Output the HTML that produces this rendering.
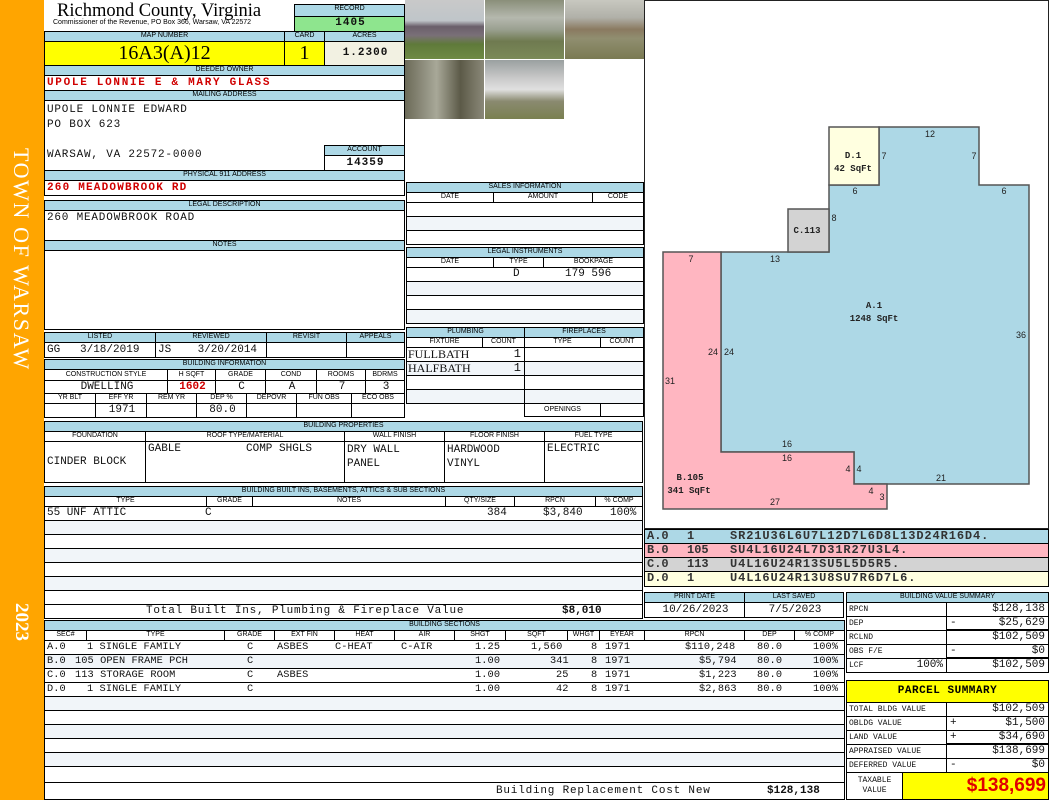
<!DOCTYPE html>
<html><head><meta charset="utf-8"><style>
*{margin:0;padding:0}
body{width:1050px;height:800px;background:#fff;position:relative;overflow:hidden;font-family:"Liberation Sans",sans-serif}
.c{position:absolute;box-sizing:border-box;border:1px solid #000;overflow:hidden;white-space:nowrap}
.h{background:#add8e6;font:7px/8px "Liberation Sans",sans-serif;text-align:center;color:#000}
.m{font:11px/12px "Liberation Mono",monospace;padding-left:2px;color:#111}
.r{text-align:right;padding-right:3px}
.ctr{text-align:center}
.t{position:absolute;white-space:nowrap}
.red{color:#d00000;font-weight:bold}
.st{background:#f1f5f9}
.sec{font-size:10.3px;letter-spacing:0.1px}
</style></head><body>
<!-- sidebar -->
<div style="position:absolute;left:0;top:0;width:44px;height:800px;background:#ffa500"></div>
<div class="t" style="left:22px;top:148px;transform-origin:0 0;transform:rotate(90deg) translateY(-12px);color:#fff;font:22px 'Liberation Serif',serif;letter-spacing:1.6px">TOWN OF WARSAW</div>
<div class="t" style="left:22px;top:603px;transform-origin:0 0;transform:rotate(90deg) translateY(-10px);color:#fff;font:bold 19px 'Liberation Serif',serif">2023</div>

<!-- header -->
<div class="t" style="left:57px;top:1px;font:18.5px 'Liberation Serif',serif">Richmond County, Virginia</div>
<div class="t" style="left:53px;top:19px;font:7px 'Liberation Sans',sans-serif">Commissioner of the Revenue, PO Box 366, Warsaw, VA 22572</div>
<div class="c h" style="left:294px;top:4px;width:111px;height:13px">RECORD</div>
<div class="c m ctr" style="left:294px;top:16px;width:111px;height:16px;background:#8ee58e;font-weight:bold;letter-spacing:1px">1405</div>

<div class="c h" style="left:44px;top:31px;width:241px;height:11px">MAP NUMBER</div>
<div class="c h" style="left:284px;top:31px;width:41px;height:11px">CARD</div>
<div class="c h" style="left:324px;top:31px;width:81px;height:11px">ACRES</div>
<div class="c ctr" style="left:44px;top:41px;width:241px;height:25px;background:#ffff00;font:20px/23px 'Liberation Serif',serif">16A3(A)12</div>
<div class="c ctr" style="left:284px;top:41px;width:41px;height:25px;background:#ffff00;font:20px/23px 'Liberation Serif',serif">1</div>
<div class="c m ctr" style="left:324px;top:41px;width:81px;height:25px;background:#f2f1e2;line-height:23px;font-weight:bold;letter-spacing:1px">1.2300</div>

<div class="c h" style="left:44px;top:65px;width:361px;height:11px">DEEDED OWNER</div>
<div class="c m red" style="left:44px;top:75px;width:361px;height:16px;line-height:15px;letter-spacing:1.7px">UPOLE LONNIE E &amp; MARY GLASS</div>
<div class="c h" style="left:44px;top:90px;width:361px;height:11px">MAILING ADDRESS</div>
<div class="c m" style="left:44px;top:100px;width:361px;height:71px;line-height:15px;padding-top:2px;letter-spacing:0.8px">UPOLE LONNIE EDWARD<br>PO BOX 623<br><br>WARSAW, VA 22572-0000</div>
<div class="c h" style="left:324px;top:145px;width:81px;height:11px">ACCOUNT</div>
<div class="c m ctr" style="left:324px;top:155px;width:81px;height:16px;font-weight:bold;line-height:15px;letter-spacing:1px">14359</div>
<div class="c h" style="left:44px;top:170px;width:361px;height:11px">PHYSICAL 911 ADDRESS</div>
<div class="c m red" style="left:44px;top:180px;width:361px;height:16px;line-height:15px;letter-spacing:1.2px">260 MEADOWBROOK RD</div>
<div class="c h" style="left:44px;top:200px;width:361px;height:11px">LEGAL DESCRIPTION</div>
<div class="c m" style="left:44px;top:210px;width:361px;height:31px;line-height:15px;letter-spacing:0.8px">260 MEADOWBROOK ROAD</div>
<div class="c h" style="left:44px;top:240px;width:361px;height:11px">NOTES</div>
<div class="c" style="left:44px;top:250px;width:361px;height:80px"></div>

<!-- listed -->
<div class="c h" style="left:44px;top:332px;width:112px;height:11px">LISTED</div>
<div class="c h" style="left:155px;top:332px;width:112px;height:11px">REVIEWED</div>
<div class="c h" style="left:266px;top:332px;width:81px;height:11px">REVISIT</div>
<div class="c h" style="left:346px;top:332px;width:59px;height:11px">APPEALS</div>
<div class="c m" style="left:44px;top:342px;width:112px;height:16px;line-height:14px">GG&nbsp;&nbsp;&nbsp;3/18/2019</div>
<div class="c m" style="left:155px;top:342px;width:112px;height:16px;line-height:14px">JS&nbsp;&nbsp;&nbsp;&nbsp;3/20/2014</div>
<div class="c" style="left:266px;top:342px;width:81px;height:16px"></div>
<div class="c" style="left:346px;top:342px;width:59px;height:16px"></div>

<!-- building info -->
<div class="c h" style="left:44px;top:359px;width:361px;height:11px">BUILDING INFORMATION</div>
<div class="c h" style="left:44px;top:369px;width:124px;height:12px;background:#fff;line-height:10px">CONSTRUCTION STYLE</div>
<div class="c h" style="left:167px;top:369px;width:49px;height:12px;background:#fff;line-height:10px">H SQFT</div>
<div class="c h" style="left:215px;top:369px;width:51px;height:12px;background:#fff;line-height:10px">GRADE</div>
<div class="c h" style="left:265px;top:369px;width:52px;height:12px;background:#fff;line-height:10px">COND</div>
<div class="c h" style="left:316px;top:369px;width:50px;height:12px;background:#fff;line-height:10px">ROOMS</div>
<div class="c h" style="left:365px;top:369px;width:40px;height:12px;background:#fff;line-height:10px">BDRMS</div>
<div class="c m ctr" style="left:44px;top:380px;width:124px;height:14px">DWELLING</div>
<div class="c m ctr red" style="left:167px;top:380px;width:49px;height:14px">1602</div>
<div class="c m ctr" style="left:215px;top:380px;width:51px;height:14px">C</div>
<div class="c m ctr" style="left:265px;top:380px;width:52px;height:14px">A</div>
<div class="c m ctr" style="left:316px;top:380px;width:50px;height:14px">7</div>
<div class="c m ctr" style="left:365px;top:380px;width:40px;height:14px">3</div>
<div class="c h" style="left:44px;top:393px;width:52px;height:11px;background:#fff">YR BLT</div>
<div class="c h" style="left:95px;top:393px;width:52px;height:11px;background:#fff">EFF YR</div>
<div class="c h" style="left:146px;top:393px;width:51px;height:11px;background:#fff">REM YR</div>
<div class="c h" style="left:196px;top:393px;width:51px;height:11px;background:#fff">DEP %</div>
<div class="c h" style="left:246px;top:393px;width:51px;height:11px;background:#fff">DEPOVR</div>
<div class="c h" style="left:296px;top:393px;width:56px;height:11px;background:#fff">FUN OBS</div>
<div class="c h" style="left:351px;top:393px;width:54px;height:11px;background:#fff">ECO OBS</div>
<div class="c" style="left:44px;top:403px;width:52px;height:15px"></div>
<div class="c m ctr" style="left:95px;top:403px;width:52px;height:15px">1971</div>
<div class="c" style="left:146px;top:403px;width:51px;height:15px"></div>
<div class="c m ctr" style="left:196px;top:403px;width:51px;height:15px">80.0</div>
<div class="c" style="left:246px;top:403px;width:51px;height:15px"></div>
<div class="c" style="left:296px;top:403px;width:56px;height:15px"></div>
<div class="c" style="left:351px;top:403px;width:54px;height:15px"></div>

<!-- photos -->
<div style="position:absolute;left:405px;top:0;width:79px;height:59px;background:linear-gradient(#c9c9c9 0,#bfc5c9 35%,#6a5f6a 45%,#7a7078 60%,#5f7a3a 75%,#6f8a45 100%)"></div>
<div style="position:absolute;left:485px;top:0;width:79px;height:59px;background:linear-gradient(#8a8f7a 0,#b5b8ae 30%,#9aa090 50%,#6f7a50 70%,#7b8a58 100%)"></div>
<div style="position:absolute;left:565px;top:0;width:79px;height:59px;background:linear-gradient(#c8c8c0 0,#b0b0a8 30%,#8a7a60 50%,#908e70 65%,#7a7a52 100%)"></div>
<div style="position:absolute;left:405px;top:60px;width:79px;height:59px;background:linear-gradient(90deg,#6b6a58,#a8a898 40%,#5c5a48 70%,#8a8878)"></div>
<div style="position:absolute;left:485px;top:60px;width:79px;height:59px;background:linear-gradient(#9aa0a0 0,#c8c8c8 30%,#e0e0e0 50%,#8a8a70 70%,#7a8050 100%)"></div>

<!-- sales -->
<div class="c h" style="left:406px;top:182px;width:238px;height:11px">SALES INFORMATION</div>
<div class="c h" style="left:406px;top:192px;width:88px;height:11px;background:#fff">DATE</div>
<div class="c h" style="left:493px;top:192px;width:100px;height:11px;background:#fff">AMOUNT</div>
<div class="c h" style="left:592px;top:192px;width:52px;height:11px;background:#fff">CODE</div>
<div class="c" style="left:406px;top:202px;width:238px;height:15px"></div>
<div class="c st" style="left:406px;top:216px;width:238px;height:15px"></div>
<div class="c" style="left:406px;top:230px;width:238px;height:15px"></div>
<div class="c h" style="left:406px;top:247px;width:238px;height:11px">LEGAL INSTRUMENTS</div>
<div class="c h" style="left:406px;top:257px;width:88px;height:11px;background:#fff">DATE</div>
<div class="c h" style="left:493px;top:257px;width:51px;height:11px;background:#fff">TYPE</div>
<div class="c h" style="left:543px;top:257px;width:101px;height:11px;background:#fff">BOOKPAGE</div>
<div class="c m" style="left:406px;top:267px;width:238px;height:15px"><span class="t" style="left:106px">D</span><span class="t" style="left:158px">179 596</span></div>
<div class="c st" style="left:406px;top:281px;width:238px;height:15px"></div>
<div class="c" style="left:406px;top:295px;width:238px;height:15px"></div>
<div class="c st" style="left:406px;top:309px;width:238px;height:15px"></div>
<div class="c h" style="left:406px;top:327px;width:119px;height:11px">PLUMBING</div>
<div class="c h" style="left:524px;top:327px;width:120px;height:11px">FIREPLACES</div>
<div class="c h" style="left:406px;top:337px;width:77px;height:11px;background:#fff">FIXTURE</div>
<div class="c h" style="left:482px;top:337px;width:43px;height:11px;background:#fff">COUNT</div>
<div class="c h" style="left:524px;top:337px;width:77px;height:11px;background:#fff">TYPE</div>
<div class="c h" style="left:600px;top:337px;width:44px;height:11px;background:#fff">COUNT</div>
<div class="c m" style="left:406px;top:347px;width:119px;height:15px;padding-left:1px;font-family:'Liberation Serif',serif;font-size:12px">FULLBATH<span class="t" style="right:3px;font-family:'Liberation Mono'">1</span></div>
<div class="c m st" style="left:406px;top:361px;width:119px;height:15px;padding-left:1px;font-family:'Liberation Serif',serif;font-size:12px">HALFBATH<span class="t" style="right:3px;font-family:'Liberation Mono'">1</span></div>
<div class="c" style="left:406px;top:375px;width:119px;height:15px"></div>
<div class="c st" style="left:406px;top:389px;width:119px;height:15px"></div>
<div class="c" style="left:524px;top:347px;width:120px;height:15px"></div>
<div class="c st" style="left:524px;top:361px;width:120px;height:15px"></div>
<div class="c" style="left:524px;top:375px;width:120px;height:15px"></div>
<div class="c st" style="left:524px;top:389px;width:120px;height:15px"></div>
<div class="c h" style="left:524px;top:403px;width:77px;height:14px;background:#fff;line-height:12px">OPENINGS</div>
<div class="c" style="left:600px;top:403px;width:44px;height:14px"></div>

<!-- building properties -->
<div class="c h" style="left:44px;top:421px;width:599px;height:11px">BUILDING PROPERTIES</div>
<div class="c h" style="left:44px;top:431px;width:102px;height:11px;background:#fff">FOUNDATION</div>
<div class="c h" style="left:145px;top:431px;width:200px;height:11px;background:#fff">ROOF TYPE/MATERIAL</div>
<div class="c h" style="left:344px;top:431px;width:101px;height:11px;background:#fff">WALL FINISH</div>
<div class="c h" style="left:444px;top:431px;width:101px;height:11px;background:#fff">FLOOR FINISH</div>
<div class="c h" style="left:544px;top:431px;width:99px;height:11px;background:#fff">FUEL TYPE</div>
<div class="c m" style="left:44px;top:441px;width:102px;height:42px;padding-top:14px">CINDER BLOCK</div>
<div class="c m" style="left:145px;top:441px;width:200px;height:42px;padding-top:1px">GABLE<span class="t" style="left:100px">COMP SHGLS</span></div>
<div class="c m" style="left:344px;top:441px;width:101px;height:42px;padding-top:1px;line-height:14px">DRY WALL<br>PANEL</div>
<div class="c m" style="left:444px;top:441px;width:101px;height:42px;padding-top:1px;line-height:14px">HARDWOOD<br>VINYL</div>
<div class="c m" style="left:544px;top:441px;width:99px;height:42px;padding-top:1px">ELECTRIC</div>

<!-- built ins -->
<div class="c h" style="left:44px;top:486px;width:599px;height:11px">BUILDING BUILT INS, BASEMENTS, ATTICS &amp; SUB SECTIONS</div>
<div class="c h" style="left:44px;top:496px;width:163px;height:11px;background:#fff">TYPE</div>
<div class="c h" style="left:206px;top:496px;width:47px;height:11px;background:#fff">GRADE</div>
<div class="c h" style="left:252px;top:496px;width:194px;height:11px;background:#fff">NOTES</div>
<div class="c h" style="left:445px;top:496px;width:70px;height:11px;background:#fff">QTY/SIZE</div>
<div class="c h" style="left:514px;top:496px;width:82px;height:11px;background:#fff">RPCN</div>
<div class="c h" style="left:595px;top:496px;width:48px;height:11px;background:#fff">% COMP</div>
<div class="c m" style="left:44px;top:506px;width:599px;height:15px">55 UNF ATTIC<span class="t" style="left:160px">C</span><span class="t" style="left:442px">384</span><span class="t" style="left:498px">$3,840</span><span class="t" style="left:565px">100%</span></div>
<div class="c st" style="left:44px;top:520px;width:599px;height:15px"></div>
<div class="c" style="left:44px;top:534px;width:599px;height:15px"></div>
<div class="c st" style="left:44px;top:548px;width:599px;height:15px"></div>
<div class="c" style="left:44px;top:562px;width:599px;height:15px"></div>
<div class="c st" style="left:44px;top:576px;width:599px;height:15px"></div>
<div class="c" style="left:44px;top:590px;width:599px;height:15px"></div>
<div class="c m" style="left:44px;top:604px;width:599px;height:15px;line-height:13px"><span class="t" style="left:101px;letter-spacing:0.8px">Total Built Ins, Plumbing &amp; Fireplace Value</span><span class="t" style="left:517px;font-weight:bold">$8,010</span></div>

<!-- print date -->
<div class="c h" style="left:644px;top:592px;width:101px;height:11px">PRINT DATE</div>
<div class="c h" style="left:744px;top:592px;width:100px;height:11px">LAST SAVED</div>
<div class="c m ctr" style="left:644px;top:602px;width:101px;height:16px;line-height:14px">10/26/2023</div>
<div class="c m ctr" style="left:744px;top:602px;width:100px;height:16px;line-height:14px">7/5/2023</div>

<!-- building sections -->
<div class="c h" style="left:44px;top:620px;width:801px;height:11px">BUILDING SECTIONS</div>
<div class="c h" style="left:44px;top:630px;width:43px;height:11px;background:#fff">SEC#</div>
<div class="c h" style="left:86px;top:630px;width:139px;height:11px;background:#fff">TYPE</div>
<div class="c h" style="left:224px;top:630px;width:51px;height:11px;background:#fff">GRADE</div>
<div class="c h" style="left:274px;top:630px;width:61px;height:11px;background:#fff">EXT FIN</div>
<div class="c h" style="left:334px;top:630px;width:61px;height:11px;background:#fff">HEAT</div>
<div class="c h" style="left:394px;top:630px;width:61px;height:11px;background:#fff">AIR</div>
<div class="c h" style="left:454px;top:630px;width:52px;height:11px;background:#fff">SHGT</div>
<div class="c h" style="left:505px;top:630px;width:63px;height:11px;background:#fff">SQFT</div>
<div class="c h" style="left:567px;top:630px;width:33px;height:11px;background:#fff">WHGT</div>
<div class="c h" style="left:599px;top:630px;width:46px;height:11px;background:#fff">EYEAR</div>
<div class="c h" style="left:644px;top:630px;width:101px;height:11px;background:#fff">RPCN</div>
<div class="c h" style="left:744px;top:630px;width:51px;height:11px;background:#fff">DEP</div>
<div class="c h" style="left:794px;top:630px;width:51px;height:11px;background:#fff">% COMP</div>

<div class="c m sec" style="left:44px;top:640px;width:801px;height:15px;line-height:13px"><span class="t" style="left:2px">A.0</span><span class="t" style="left:42px">1 SINGLE FAMILY</span><span class="t" style="left:202px">C</span><span class="t" style="left:232px">ASBES</span><span class="t" style="left:290px">C-HEAT</span><span class="t" style="left:356px">C-AIR</span><span class="t" style="left:430px">1.25</span><span class="t" style="left:486px">1,560</span><span class="t" style="left:546px">8</span><span class="t" style="left:560px">1971</span><span class="t" style="left:640px">$110,248</span><span class="t" style="left:712px">80.0</span><span class="t" style="left:768px">100%</span></div>
<div class="c m st sec" style="left:44px;top:654px;width:801px;height:15px;line-height:13px"><span class="t" style="left:2px">B.0</span><span class="t" style="left:30px">105 OPEN FRAME PCH</span><span class="t" style="left:202px">C</span><span class="t" style="left:430px">1.00</span><span class="t" style="left:505px">341</span><span class="t" style="left:546px">8</span><span class="t" style="left:560px">1971</span><span class="t" style="left:654px">$5,794</span><span class="t" style="left:712px">80.0</span><span class="t" style="left:768px">100%</span></div>
<div class="c m sec" style="left:44px;top:668px;width:801px;height:15px;line-height:13px"><span class="t" style="left:2px">C.0</span><span class="t" style="left:30px">113 STORAGE ROOM</span><span class="t" style="left:202px">C</span><span class="t" style="left:232px">ASBES</span><span class="t" style="left:430px">1.00</span><span class="t" style="left:511px">25</span><span class="t" style="left:546px">8</span><span class="t" style="left:560px">1971</span><span class="t" style="left:654px">$1,223</span><span class="t" style="left:712px">80.0</span><span class="t" style="left:768px">100%</span></div>
<div class="c m sec" style="left:44px;top:682px;width:801px;height:15px;line-height:13px"><span class="t" style="left:2px">D.0</span><span class="t" style="left:42px">1 SINGLE FAMILY</span><span class="t" style="left:202px">C</span><span class="t" style="left:430px">1.00</span><span class="t" style="left:511px">42</span><span class="t" style="left:546px">8</span><span class="t" style="left:560px">1971</span><span class="t" style="left:654px">$2,863</span><span class="t" style="left:712px">80.0</span><span class="t" style="left:768px">100%</span></div>
<div class="c st" style="left:44px;top:696px;width:801px;height:15px"></div>
<div class="c" style="left:44px;top:710px;width:801px;height:15px"></div>
<div class="c st" style="left:44px;top:724px;width:801px;height:15px"></div>
<div class="c" style="left:44px;top:738px;width:801px;height:15px"></div>
<div class="c st" style="left:44px;top:752px;width:801px;height:15px"></div>
<div class="c" style="left:44px;top:766px;width:801px;height:17px"></div>
<div class="c m" style="left:44px;top:782px;width:801px;height:18px;line-height:16px"><span class="t" style="left:451px;letter-spacing:0.8px">Building Replacement Cost New</span><span class="t" style="left:722px;font-weight:bold">$128,138</span></div>

<!-- sketch -->
<div class="c" style="left:644px;top:0;width:405px;height:529px;border-color:#222"></div>
<svg style="position:absolute;left:0;top:0" width="1050" height="800">
<g stroke="#555" stroke-width="1.5">
<polygon fill="#add8e6" points="879,127 979,127 979,185 1029,185 1029,484 854,484 854,452 721,452 721,252 829,252 829,185 879,185"/>
<polygon fill="#ffb6c1" points="663,252 721,252 721,452 854,452 854,484 887,484 887,509 663,509"/>
<polygon fill="#d3d3d3" points="788,209 829,209 829,252 788,252"/>
<polygon fill="#ffffe0" points="829,127 879,127 879,185 829,185"/>
</g>
<g font-family="Liberation Sans" font-size="9" fill="#222" text-anchor="middle">
<text x="930" y="137">12</text><text x="884" y="159">7</text><text x="974" y="159">7</text>
<text x="855" y="194">6</text><text x="1004" y="194">6</text><text x="834" y="221">8</text>
<text x="775" y="262">13</text><text x="691" y="262">7</text><text x="1021" y="338">36</text>
<text x="713" y="355">24</text><text x="729" y="355">24</text><text x="670" y="384">31</text>
<text x="787" y="447">16</text><text x="787" y="461">16</text><text x="848" y="472">4</text><text x="859" y="472">4</text>
<text x="941" y="481">21</text><text x="871" y="494">4</text><text x="882" y="500">3</text><text x="775" y="505">27</text>
</g>
<g font-family="Liberation Mono" font-size="9" font-weight="bold" fill="#222" text-anchor="middle">
<text x="853" y="158">D.1</text><text x="853" y="171">42 SqFt</text>
<text x="807" y="233">C.113</text>
<text x="874" y="308">A.1</text><text x="874" y="321">1248 SqFt</text>
<text x="690" y="480">B.105</text><text x="689" y="493">341 SqFt</text>
</g>
</svg>

<!-- legend -->
<div class="c m" style="left:644px;top:529px;width:405px;height:15px;background:#add8e6;font-weight:bold;line-height:13px;color:#333;font-size:12px"><span class="t" style="left:2px">A.0</span><span class="t" style="left:42px">1</span><span class="t" style="left:85px;letter-spacing:0.9px">SR21U36L6U7L12D7L6D8L13D24R16D4.</span></div>
<div class="c m" style="left:644px;top:543px;width:405px;height:15px;background:#ffb6c1;font-weight:bold;line-height:13px;color:#333;font-size:12px"><span class="t" style="left:2px">B.0</span><span class="t" style="left:42px">105</span><span class="t" style="left:85px;letter-spacing:0.9px">SU4L16U24L7D31R27U3L4.</span></div>
<div class="c m" style="left:644px;top:557px;width:405px;height:15px;background:#d3d3d3;font-weight:bold;line-height:13px;color:#333;font-size:12px"><span class="t" style="left:2px">C.0</span><span class="t" style="left:42px">113</span><span class="t" style="left:85px;letter-spacing:0.9px">U4L16U24R13SU5L5D5R5.</span></div>
<div class="c m" style="left:644px;top:571px;width:405px;height:16px;background:#ffffe0;font-weight:bold;line-height:13px;color:#333;font-size:12px"><span class="t" style="left:2px">D.0</span><span class="t" style="left:42px">1</span><span class="t" style="left:85px;letter-spacing:0.9px">U4L16U24R13U8SU7R6D7L6.</span></div>

<!-- value summary -->
<div class="c h" style="left:846px;top:592px;width:203px;height:11px">BUILDING VALUE SUMMARY</div>
<div class="c m" style="left:846px;top:602px;width:101px;height:15px;font:8px/13px 'Liberation Mono'">RPCN</div>
<div class="c m r" style="left:946px;top:602px;width:103px;height:15px">$128,138</div>
<div class="c m" style="left:846px;top:616px;width:101px;height:15px;font:8px/13px 'Liberation Mono'">DEP</div>
<div class="c m r" style="left:946px;top:616px;width:103px;height:15px;border-bottom-width:2px">$25,629<span class="t" style="left:3px">-</span></div>
<div class="c m" style="left:846px;top:630px;width:101px;height:15px;font:8px/13px 'Liberation Mono'">RCLND</div>
<div class="c m r" style="left:946px;top:630px;width:103px;height:15px">$102,509</div>
<div class="c m" style="left:846px;top:644px;width:101px;height:15px;font:8px/13px 'Liberation Mono'">OBS F/E</div>
<div class="c m r" style="left:946px;top:644px;width:103px;height:15px;border-bottom-width:2px">$0<span class="t" style="left:3px">-</span></div>
<div class="c m" style="left:846px;top:658px;width:101px;height:15px;font:8px/13px 'Liberation Mono'">LCF<span class="t" style="right:3px;font-size:11px">100%</span></div>
<div class="c m r" style="left:946px;top:658px;width:103px;height:15px">$102,509</div>

<!-- parcel summary -->
<div class="c ctr" style="left:846px;top:680px;width:203px;height:23px;background:#ffff00;font:bold 11px/20px 'Liberation Mono';letter-spacing:0.5px">PARCEL SUMMARY</div>
<div class="c m" style="left:846px;top:702px;width:101px;height:15px;font:8px/13px 'Liberation Mono'">TOTAL BLDG VALUE</div>
<div class="c m r" style="left:946px;top:702px;width:103px;height:15px">$102,509</div>
<div class="c m" style="left:846px;top:716px;width:101px;height:15px;font:8px/13px 'Liberation Mono'">OBLDG VALUE</div>
<div class="c m r" style="left:946px;top:716px;width:103px;height:15px">$1,500<span class="t" style="left:3px">+</span></div>
<div class="c m" style="left:846px;top:730px;width:101px;height:15px;font:8px/13px 'Liberation Mono'">LAND VALUE</div>
<div class="c m r" style="left:946px;top:730px;width:103px;height:15px;border-bottom-width:2px">$34,690<span class="t" style="left:3px">+</span></div>
<div class="c m" style="left:846px;top:744px;width:101px;height:15px;font:8px/13px 'Liberation Mono'">APPRAISED VALUE</div>
<div class="c m r" style="left:946px;top:744px;width:103px;height:15px">$138,699</div>
<div class="c m" style="left:846px;top:758px;width:101px;height:15px;font:8px/13px 'Liberation Mono'">DEFERRED VALUE</div>
<div class="c m r" style="left:946px;top:758px;width:103px;height:15px">$0<span class="t" style="left:3px">-</span></div>
<div class="c m ctr" style="left:846px;top:772px;width:57px;height:28px;font:8px/10px 'Liberation Mono';padding:3px 0 0">TAXABLE<br>VALUE</div>
<div class="c r" style="left:902px;top:772px;width:147px;height:28px;background:#ffff00;color:#e00000;font:bold 19px/26px 'Liberation Sans',sans-serif;padding-right:2px">$138,699</div>
</body></html>
